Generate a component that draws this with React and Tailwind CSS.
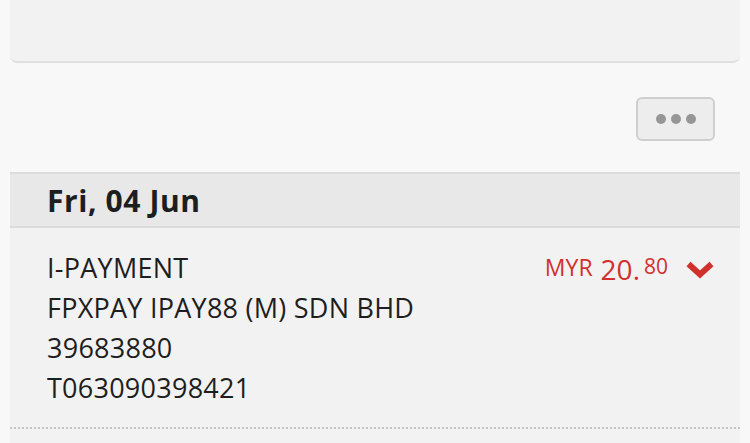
import React from 'react';

const lines = ['I-PAYMENT', 'FPXPAY IPAY88 (M) SDN BHD', '39683880', 'T063090398421'];

const App = () => {
  return (
    <div className="w-[750px] h-[443px] overflow-hidden bg-[#f8f8f8] font-['Open_Sans',sans-serif]">
      {/* top card */}
      <div className="mx-[10px] h-[63px] bg-[#f2f2f2] rounded-b-[7px] border-b-2 border-[#e0e0e0]" />

      {/* more button */}
      <div className="flex justify-end pr-[35px] pt-[34px]">
        <button className="w-[79px] h-[44px] flex items-center justify-center gap-[5px] rounded-[6px] border-2 border-[#cfcfcf] bg-[#ededed]">
          <span className="w-[10px] h-[10px] rounded-full bg-[#969696]" />
          <span className="w-[10px] h-[10px] rounded-full bg-[#969696]" />
          <span className="w-[10px] h-[10px] rounded-full bg-[#969696]" />
        </button>
      </div>

      {/* date header */}
      <div className="mx-[10px] mt-[31px] h-[56px] bg-[#e8e8e8] border-y-2 border-[#dcdcdc] flex items-center pl-[37px]">
        <span className="text-[30px] font-bold text-[#1c1e21] tracking-[0.6px]">Fri, 04 Jun</span>
      </div>

      {/* transaction */}
      <div className="mx-[10px] bg-[#f2f2f2] h-[300px]">
        <div className="flex justify-between pl-[37px] pr-[26px] pt-[20px] pb-[19px] border-b-2 border-dotted border-[#c4c4c4]">
          <div className="text-[27px] leading-[40px] tracking-[0.25px] text-[#1e1e1e]">
            {lines.map((l) => (
              <div key={l}>{l}</div>
            ))}
          </div>
          <div className="flex items-start pt-[8px] text-[#d0312d] leading-none">
            <span className="text-[23px] mr-[8px]">MYR</span>
            <span className="text-[28px] -mt-[1px]">20.</span>
            <span className="text-[21px] ml-[4px]">80</span>
            <svg width="28" height="18" viewBox="0 0 28 18" className="ml-[18px] mt-[5px]">
              <path d="M2.5 3 L14 13.5 L25.5 3" fill="none" stroke="#d0312d" strokeWidth="6" strokeLinecap="butt" strokeLinejoin="miter" />
            </svg>
          </div>
        </div>
      </div>
    </div>
  );
};

export default App;
